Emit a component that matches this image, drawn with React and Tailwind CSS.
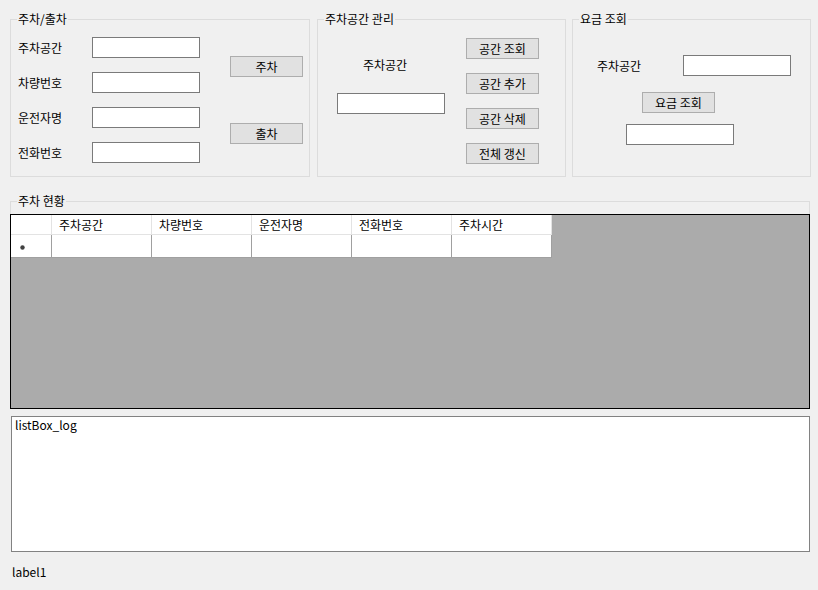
const TextBox = ({ className = "" }) => (
  <div className={`h-[21px] w-[108px] border border-[#7a7a7a] bg-white ${className}`} />
);

const Button = ({ children, className = "" }) => (
  <button
    className={`block h-[21px] w-[73px] border border-[#adadad] bg-[#e1e1e1] text-[12px] leading-none text-black ${className}`}
  >
    {children}
  </button>
);

const Group = ({ title, className = "", children }) => (
  <fieldset className={`border border-[#dcdcdc] ${className}`}>
    <legend className="ml-[6px] px-[1px] text-[12px] leading-[12px]">{title}</legend>
    {children}
  </fieldset>
);

const columns = ["주차공간", "차량번호", "운전자명", "전화번호", "주차시간"];

const App = () => {
  return (
    <div className="h-[590px] w-[818px] overflow-hidden bg-[#f0f0f0] text-[12px] leading-[14px] text-black font-['Noto_Sans_CJK_KR',sans-serif]">
      {/* top group boxes */}
      <div className="flex pl-[10px] pt-[13px]">
        <Group title="주차/출차" className="h-[164px] w-[300px]">
          <div className="flex pl-[7px]">
            <div className="mt-[12px] flex flex-col gap-[14px]">
              {["주차공간", "차량번호", "운전자명", "전화번호"].map((label) => (
                <div key={label} className="flex h-[21px] items-center">
                  <span className="w-[74px]">{label}</span>
                  <TextBox />
                </div>
              ))}
            </div>
            <div className="ml-[30px] mt-[31px] flex flex-col gap-[46px]">
              <Button>주차</Button>
              <Button>출차</Button>
            </div>
          </div>
        </Group>

        <Group title="주차공간 관리" className="ml-[7px] h-[164px] w-[249px]">
          <div className="flex">
            <div className="ml-[19px] mt-[33px] flex flex-col">
              <span className="pl-[26px]">주차공간</span>
              <TextBox className="mt-[21px]" />
            </div>
            <div className="ml-[21px] mt-[13px] flex flex-col gap-[14px]">
              <Button>공간 조회</Button>
              <Button>공간 추가</Button>
              <Button>공간 삭제</Button>
              <Button>전체 갱신</Button>
            </div>
          </div>
        </Group>

        <Group title="요금 조회" className="ml-[6px] h-[164px] w-[239px]">
          <div className="mt-[30px] flex items-center pl-[24px]">
            <span className="w-[86px]">주차공간</span>
            <TextBox />
          </div>
          <Button className="ml-[69px] mt-[16px]">요금 조회</Button>
          <TextBox className="ml-[53px] mt-[11px]" />
        </Group>
      </div>

      {/* parking status */}
      <fieldset className="ml-[10px] mt-[18px] w-[800px] border border-b-0 border-[#dcdcdc]">
        <legend className="ml-[6px] px-[1px] text-[12px] leading-[12px]">주차 현황</legend>
        <div className="-mx-px mt-[7px] h-[195px] border border-black bg-[#ababab]">
          <div className="flex">
            <div className="h-[20px] w-[41px] border-b border-r border-[#e3e3e3] bg-white" />
            {columns.map((c) => (
              <div
                key={c}
                className="h-[20px] w-[100px] border-b border-r border-[#e3e3e3] bg-white pl-[7px] leading-[19px]"
              >
                {c}
              </div>
            ))}
          </div>
          <div className="flex">
            <div className="flex h-[23px] w-[41px] items-center border-b border-r border-[#a0a0a0] bg-white pl-[8px]">
              <svg width="7" height="7" viewBox="0 0 7 7" className="mt-[2px]">
                <circle cx="3.5" cy="3.5" r="2.2" fill="#404040" />
              </svg>
            </div>
            {columns.map((c) => (
              <div key={c} className="h-[23px] w-[100px] border-b border-r border-[#a0a0a0] bg-white" />
            ))}
          </div>
        </div>
      </fieldset>

      {/* log */}
      <div className="ml-[11px] mt-[7px] h-[136px] w-[799px] border border-[#828282] bg-white pl-[3px] pt-[1px]">
        listBox_log
      </div>

      <div className="ml-[12px] mt-[13px]">label1</div>
    </div>
  );
};

export default App;
